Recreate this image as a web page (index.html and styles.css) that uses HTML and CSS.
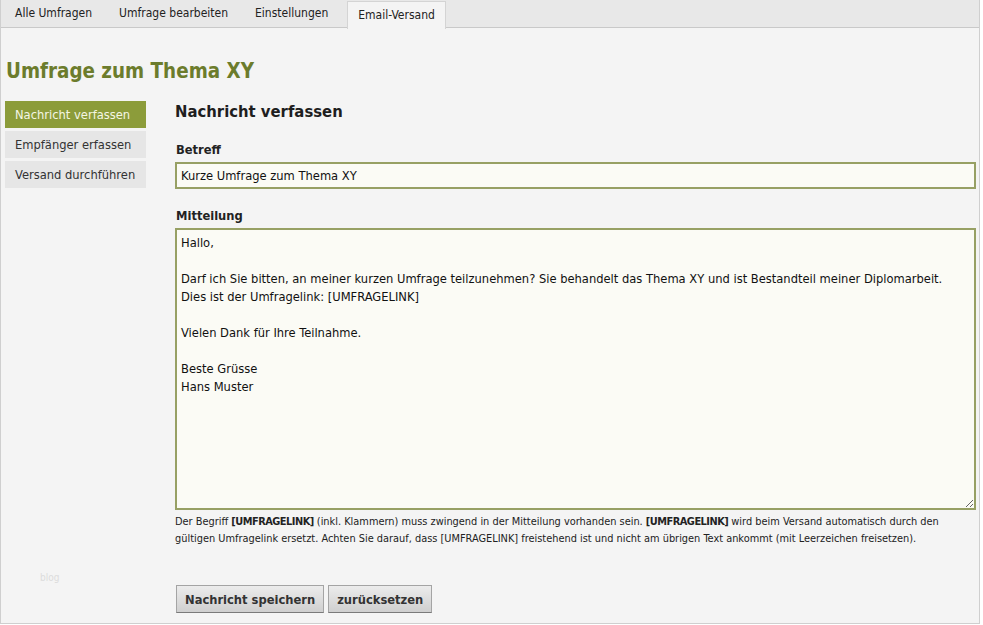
FILE: index.html
```html
<!DOCTYPE html>
<html lang="de">
<head>
  <meta charset="UTF-8">
  <title>Email-Versand</title>
  <link rel="stylesheet" href="styles.css">
</head>
<body>
  <div class="page">
    <div class="tabs">
      <a class="tab" href="#">Alle Umfragen</a>
      <a class="tab" href="#">Umfrage bearbeiten</a>
      <a class="tab" href="#">Einstellungen</a>
      <a class="tab active" href="#">Email-Versand</a>
    </div>

    <h1 class="survey-title">Umfrage zum Thema XY</h1>

    <div class="main">
      <div class="steps">
        <a class="step active" href="#">Nachricht verfassen</a>
        <a class="step" href="#">Empfänger erfassen</a>
        <a class="step" href="#">Versand durchführen</a>
        <div class="blog">blog</div>
      </div>

      <div class="content">
        <h2>Nachricht verfassen</h2>
        <label class="field-label">Betreff</label>
        <input class="subject" type="text" value="Kurze Umfrage zum Thema XY">

        <label class="field-label">Mitteilung</label>
        <textarea class="message">Hallo,

Darf ich Sie bitten, an meiner kurzen Umfrage teilzunehmen? Sie behandelt das Thema XY und ist Bestandteil meiner Diplomarbeit.
Dies ist der Umfragelink: [UMFRAGELINK]

Vielen Dank für Ihre Teilnahme.

Beste Grüsse
Hans Muster</textarea>
        <p class="hint">Der Begriff <b>[UMFRAGELINK]</b> (inkl. Klammern) muss zwingend in der Mitteilung vorhanden sein. <b>[UMFRAGELINK]</b> wird beim Versand automatisch durch den gültigen Umfragelink ersetzt. Achten Sie darauf, dass [UMFRAGELINK] freistehend ist und nicht am übrigen Text ankommt (mit Leerzeichen freisetzen).</p>

        <div class="buttons">
          <button class="btn">Nachricht speichern</button>
          <button class="btn">zurücksetzen</button>
        </div>
      </div>
    </div>
  </div>
</body>
</html>
```

FILE: styles.css
```css
html, body {
  margin: 0;
  padding: 0;
  width: 100%;
  height: 100%;
  overflow: hidden;
  background: #fff;
}
* {
  margin: 0;
  padding: 0;
  box-sizing: border-box;
}
.page {
  width: 980px;
  height: 624px;
  background: #f4f4f4;
  border: 1px solid #cfcfcf;
  border-top: none;
  font-family: "DejaVu Sans Condensed", "DejaVu Sans", sans-serif;
  font-size: 12.8px;
  color: #222;
}
.tabs {
  display: flex;
  height: 28px;
  padding-left: 4px;
  background: #e8e8e8;
  border-bottom: 1px solid #c9c9c9;
}
.tab {
  display: block;
  padding: 0 10px;
  margin-right: 7px;
  line-height: 27px;
  color: #222;
  text-decoration: none;
  font-size: 12px;
}
.tab.active {
  margin-left: 2px;
  background: #f4f4f4;
  border: 1px solid #d4d4d4;
  border-bottom: none;
  height: 28px;
  line-height: 26px;
  margin-top: 1px;
}
.survey-title {
  margin: 30px 0 0 5px;
  font-size: 20.4px;
  font-weight: bold;
  color: #6c7c2c;
  line-height: 26px;
}
.main {
  display: flex;
  gap: 29px;
  margin-top: 17px;
  padding-left: 4px;
}
.steps {
  width: 141px;
  flex-shrink: 0;
  display: flex;
  flex-direction: column;
  gap: 3px;
}
.step {
  display: block;
  height: 27px;
  line-height: 27px;
  padding-left: 10px;
  background: #e6e6e6;
  color: #333;
  text-decoration: none;
  font-size: 12.8px;
}
.step.active {
  background: #8c9c3a;
  color: #f4f6e4;
}
.blog {
  margin: 381px 0 0 35px;
  color: #dcdcdc;
  font-size: 10px;
}
.content {
  width: 801px;
}
.content h2 {
  font-size: 16.5px;
  font-weight: bold;
  color: #1e1e1e;
  line-height: 20px;
  margin: 1px 0 20px 0;
}
.field-label {
  display: block;
  font-weight: bold;
  font-size: 12.8px;
  color: #222;
  margin: 0 0 5px 1px;
  line-height: 15px;
}
.subject {
  display: block;
  width: 801px;
  height: 27px;
  border: 2px solid #97a064;
  background: #fbfbf5;
  padding: 0 4px;
  font-family: inherit;
  font-size: 12.8px;
  color: #111;
  outline: none;
  margin-bottom: 19px;
}
.message {
  display: block;
  width: 801px;
  height: 282px;
  border: 2px solid #97a064;
  background: #fbfbf5;
  padding: 4px 4px;
  font-family: inherit;
  font-size: 12.8px;
  line-height: 18px;
  color: #111;
  outline: none;
  resize: vertical;
}
.hint {
  margin-top: 3px;
  font-size: 10.9px;
  line-height: 17px;
  color: #222;
}
.hint b {
  letter-spacing: -0.5px;
}
.buttons {
  display: flex;
  gap: 4px;
  margin-top: 38px;
  padding-left: 1px;
}
.btn {
  height: 28px;
  padding: 0 8px;
  font-family: inherit;
  font-size: 12.8px;
  font-weight: bold;
  color: #333;
  background: linear-gradient(#ececec, #cfcfcf);
  border: 1px solid #a4a4a4;
  border-bottom-color: #7a7a7a;
}
```
